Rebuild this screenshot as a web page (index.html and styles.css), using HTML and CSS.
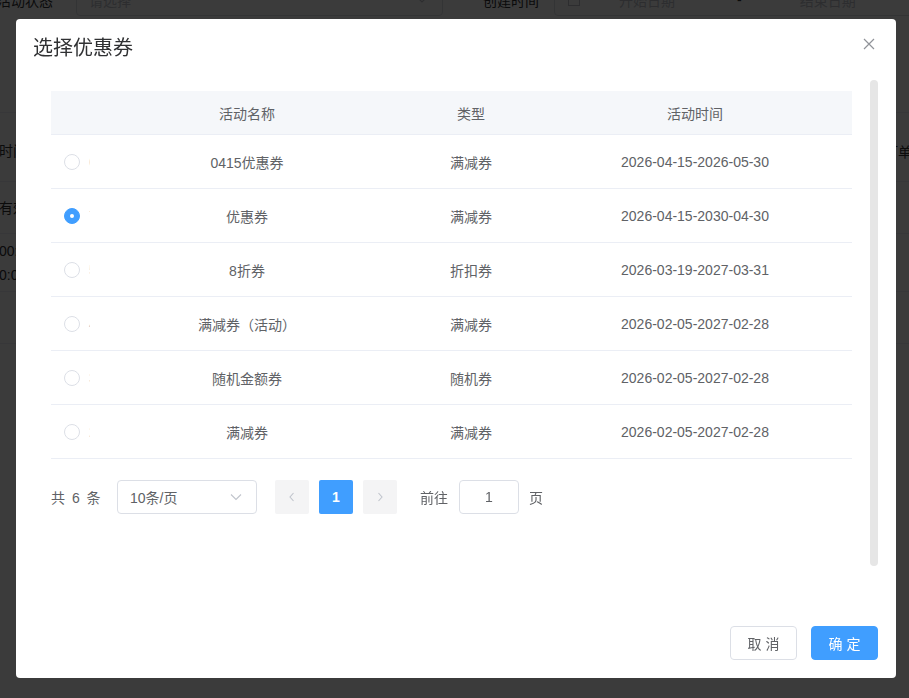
FILE: index.html
```html
<!DOCTYPE html>
<html lang="zh-CN">
<head>
    <meta charset="UTF-8">
    <meta name="viewport" content="width=device-width, initial-scale=1.0">
    <title>选择优惠券</title>
    <link rel="stylesheet" href="styles.css">
</head>
<body>
    <div class="page">
        <div class="filters">
            <div class="filter-label">活动状态</div>
            <div class="filter-select">
                <span>请选择</span>
                <svg width="12" height="12" viewBox="0 0 12 12"><path d="M2 4l4 4 4-4" fill="none" stroke="#c0c4cc" stroke-width="1.2"/></svg>
            </div>
            <div class="filter-label date-label">创建时间</div>
            <div class="filter-date">
                <svg width="14" height="14" viewBox="0 0 14 14"><rect x="1.5" y="2.5" width="11" height="10" fill="none" stroke="#c0c4cc"/><path d="M1.5 5.5h11" stroke="#c0c4cc"/></svg>
                <span class="date-start">开始日期</span>
                <span class="date-sep">-</span>
                <span class="date-end">结束日期</span>
            </div>
        </div>
        <div class="bg-table">
            <div class="bg-row bg-head"><span class="bg-left">时间</span><span class="bg-right">订单金额</span></div>
            <div class="bg-row"><span class="bg-left">有效</span></div>
            <div class="bg-row bg-tall"><span class="bg-left">00:00<br>0:00:00</span></div>
            <div class="bg-row"><span class="bg-left"></span></div>
        </div>
    </div>

    <div class="mask"></div>

    <div class="dialog">
        <div class="dialog-header">
            <span class="dialog-title">选择优惠券</span>
            <svg class="dialog-close" width="12" height="12" viewBox="0 0 12 12"><path d="M1 1l10 10M11 1L1 11" stroke="#909399" stroke-width="1.2"/></svg>
        </div>
        <div class="dialog-body">
            <div class="body-content">
                <table class="coupon-table">
                    <colgroup>
                        <col style="width: 39px">
                        <col style="width: 314px">
                        <col style="width: 134px">
                        <col style="width: 314px">
                    </colgroup>
                    <thead>
                        <tr>
                            <th></th>
                            <th>活动名称</th>
                            <th>类型</th>
                            <th>活动时间</th>
                        </tr>
                    </thead>
                    <tbody>
                        <tr>
                            <td><div class="radio-cell"><span class="radio"></span><span class="radio-label">6</span></div></td>
                            <td>0415优惠券</td>
                            <td>满减券</td>
                            <td>2026-04-15-2026-05-30</td>
                        </tr>
                        <tr>
                            <td><div class="radio-cell"><span class="radio checked"></span><span class="radio-label">7</span></div></td>
                            <td>优惠券</td>
                            <td>满减券</td>
                            <td>2026-04-15-2030-04-30</td>
                        </tr>
                        <tr>
                            <td><div class="radio-cell"><span class="radio"></span><span class="radio-label">5</span></div></td>
                            <td>8折券</td>
                            <td>折扣券</td>
                            <td>2026-03-19-2027-03-31</td>
                        </tr>
                        <tr>
                            <td><div class="radio-cell"><span class="radio"></span><span class="radio-label">4</span></div></td>
                            <td>满减券（活动）</td>
                            <td>满减券</td>
                            <td>2026-02-05-2027-02-28</td>
                        </tr>
                        <tr>
                            <td><div class="radio-cell"><span class="radio"></span><span class="radio-label">3</span></div></td>
                            <td>随机金额券</td>
                            <td>随机券</td>
                            <td>2026-02-05-2027-02-28</td>
                        </tr>
                        <tr>
                            <td><div class="radio-cell"><span class="radio"></span><span class="radio-label">2</span></div></td>
                            <td>满减券</td>
                            <td>满减券</td>
                            <td>2026-02-05-2027-02-28</td>
                        </tr>
                    </tbody>
                </table>

                <div class="pagination">
                    <span class="total">共 6 条</span>
                    <div class="page-size">
                        <span>10条/页</span>
                        <svg width="12" height="12" viewBox="0 0 12 12"><path d="M1 3.5l5 5 5-5" fill="none" stroke="#c0c4cc" stroke-width="1.1"/></svg>
                    </div>
                    <div class="pager-btn pager-prev">
                        <svg width="8" height="10" viewBox="0 0 8 10"><path d="M5.5 1L2 5l3.5 4" fill="none" stroke="#c0c4cc" stroke-width="1.1"/></svg>
                    </div>
                    <div class="pager-num active">1</div>
                    <div class="pager-btn">
                        <svg width="8" height="10" viewBox="0 0 8 10"><path d="M2.5 1L6 5 2.5 9" fill="none" stroke="#c0c4cc" stroke-width="1.1"/></svg>
                    </div>
                    <span class="jump">前往</span>
                    <div class="jump-input">1</div>
                    <span class="jump-unit">页</span>
                </div>
            </div>
            <div class="scrollbar"></div>
        </div>
        <div class="dialog-footer">
            <div class="btn">取 消</div>
            <div class="btn btn-primary">确 定</div>
        </div>
    </div>
</body>
</html>
```

FILE: styles.css
```css
body {
    margin: 0;
    height: 100vh;
    overflow: hidden;
    background: #fff;
    font-family: "Liberation Sans", "Noto Sans CJK SC", sans-serif;
    font-size: 14px;
    color: #606266;
}
.page {
    width: 909px;
    overflow: hidden;
}
.filters {
    display: flex;
    align-items: center;
    height: 34px;
    margin-top: -17px;
}
.filter-label {
    flex: none;
    width: 79px;
    margin-left: -3px;
    color: #303133;
}
.filter-select {
    flex: none;
    width: 367px;
    height: 32px;
    box-sizing: border-box;
    border: 1px solid #dcdfe6;
    border-radius: 4px;
    display: flex;
    align-items: center;
    justify-content: space-between;
    padding: 0 14px 0 12px;
    color: #c0c4cc;
}
.date-label {
    width: 71px;
    margin-left: 40px;
}
.filter-date {
    flex: none;
    width: 400px;
    height: 32px;
    box-sizing: border-box;
    border: 1px solid #dcdfe6;
    border-radius: 4px;
    display: flex;
    align-items: center;
    padding-left: 12px;
    color: #c0c4cc;
}
.date-start {
    margin-left: 38px;
}
.date-sep {
    margin-left: 62px;
    color: #303133;
}
.date-end {
    margin-left: 58px;
}
.bg-table {
    margin-top: 95px;
    border-top: 1px solid #ebeef5;
}
.bg-row {
    display: flex;
    align-items: center;
    height: 51px;
    border-bottom: 1px solid #ebeef5;
    color: #303133;
    white-space: nowrap;
}
.bg-left {
    flex: none;
    width: 885px;
    margin-left: -1px;
    line-height: 24px;
}
.bg-right {
    flex: none;
}
.bg-head {
    height: 60px;
    padding-top: 8px;
}
.bg-tall {
    height: 57px;
}
.mask {
    position: fixed;
    inset: 0;
    background: rgba(0, 0, 0, 0.77);
}
.dialog {
    position: fixed;
    left: 16px;
    top: 19px;
    width: 880px;
    height: 659px;
    background: #fff;
    border-radius: 4px;
    display: flex;
    flex-direction: column;
}
.dialog-header {
    position: relative;
    height: 61px;
    box-sizing: border-box;
    padding: 17px 17px 0;
    line-height: 24px;
}
.dialog-title {
    font-size: 20px;
    color: #303133;
}
.dialog-close {
    position: absolute;
    top: 19px;
    right: 21px;
}
.dialog-body {
    display: flex;
    height: 487px;
    padding-left: 35px;
}
.body-content {
    width: 801px;
    padding-top: 11px;
}
.scrollbar {
    width: 8px;
    height: 486px;
    margin-left: 18px;
    background: #e6e6e6;
    border-radius: 4px;
}
.coupon-table {
    width: 801px;
    table-layout: fixed;
    border-collapse: collapse;
}
.coupon-table th {
    height: 43px;
    padding: 0;
    background: #f5f7fa;
    font-weight: normal;
    color: #606266;
    border-bottom: 1px solid #ebeef5;
}
.coupon-table td {
    height: 53px;
    padding: 0;
    text-align: center;
    border-bottom: 1px solid #ebeef5;
}
.radio-cell {
    width: 39px;
    overflow: hidden;
    white-space: nowrap;
    display: flex;
    align-items: center;
    padding-left: 13px;
    box-sizing: border-box;
}
.radio {
    flex: none;
    width: 16px;
    height: 16px;
    box-sizing: border-box;
    border: 1px solid #dcdfe6;
    border-radius: 50%;
    position: relative;
}
.radio.checked {
    background: #409eff;
    border-color: #409eff;
}
.radio.checked::after {
    content: "";
    position: absolute;
    left: 5px;
    top: 5px;
    width: 4px;
    height: 4px;
    border-radius: 50%;
    background: #fff;
}
.radio-label {
    margin-left: 9px;
    color: #c0c4cc;
}
.pagination {
    display: flex;
    align-items: center;
    height: 34px;
    margin-top: 21px;
}
.total {
    width: 66px;
    word-spacing: 3px;
}
.page-size {
    width: 140px;
    height: 34px;
    box-sizing: border-box;
    border: 1px solid #dcdfe6;
    border-radius: 4px;
    display: flex;
    align-items: center;
    justify-content: space-between;
    padding: 0 14px 0 12px;
}
.pager-btn,
.pager-num {
    width: 34px;
    height: 34px;
    border-radius: 2px;
    background: #f4f4f5;
    display: flex;
    align-items: center;
    justify-content: center;
}
.pager-prev {
    margin-left: 18px;
}
.pager-num {
    margin: 0 10px;
}
.pager-num.active {
    background: #409eff;
    color: #fff;
    font-weight: bold;
}
.jump {
    margin-left: 23px;
}
.jump-input {
    width: 60px;
    height: 34px;
    box-sizing: border-box;
    margin-left: 11px;
    border: 1px solid #dcdfe6;
    border-radius: 4px;
    display: flex;
    align-items: center;
    justify-content: center;
}
.jump-unit {
    margin-left: 10px;
}
.dialog-footer {
    margin-top: auto;
    display: flex;
    justify-content: flex-end;
    gap: 14px;
    padding: 0 18px 18px;
}
.btn {
    width: 67px;
    height: 34px;
    box-sizing: border-box;
    border: 1px solid #dcdfe6;
    border-radius: 4px;
    display: flex;
    align-items: center;
    justify-content: center;
    color: #606266;
}
.btn-primary {
    background: #409eff;
    border-color: #409eff;
    color: #fff;
}
```
